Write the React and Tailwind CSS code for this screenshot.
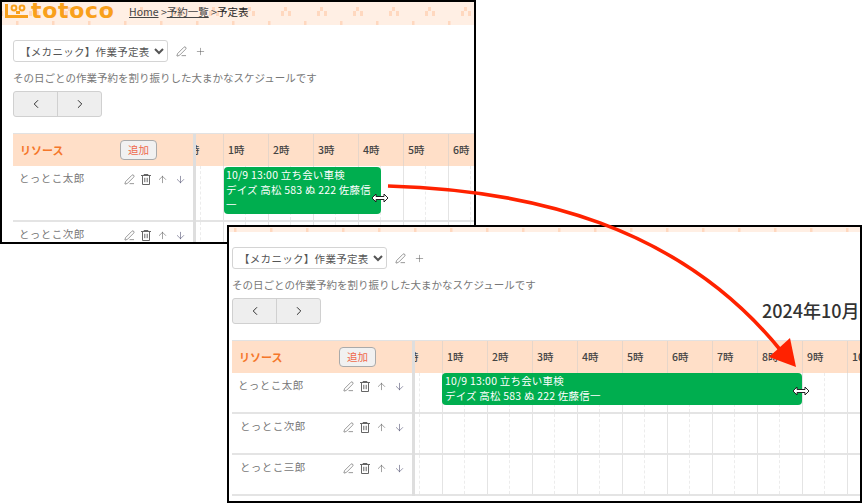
import React from "react";
import { PenLine, Plus, ArrowUp, ArrowDown, ChevronLeft, ChevronRight } from "lucide-react";

const HOURS = ["0時", "1時", "2時", "3時", "4時", "5時", "6時", "7時", "8時", "9時", "10時"];
const FONT = "font-['Noto_Sans_CJK_JP','Noto_Sans',sans-serif]";

function Trash() {
  return (
    <svg width="10" height="11" viewBox="0 0 10 11" fill="none" stroke="#666" strokeWidth="1">
      <path d="M0 1.5h10M3 1.5V.5h4v1M1.5 1.5v9h7v-9M3.8 3.8v4.4M6.2 3.8v4.4" />
    </svg>
  );
}

function Strip({ id, height, offset }) {
  return (
    <svg className="block w-full shrink-0" height={height}>
      <defs>
        <pattern id={id} x={offset} y={height - 23} width="36" height="23" patternUnits="userSpaceOnUse">
          <rect x="0" y="19" width="2.5" height="4" fill="#ffd8bf" />
          <rect x="16" y="5" width="3" height="4" fill="#ffd8bf" />
          <rect x="13" y="9" width="3" height="5" fill="#ffd8bf" />
          <rect x="20" y="9" width="3" height="5" fill="#ffd8bf" />
        </pattern>
      </defs>
      <rect width="100%" height="100%" fill="#ffefe4" />
      <rect width="100%" height="100%" fill={`url(#${id})`} />
    </svg>
  );
}

function Logo() {
  return (
    <div className="absolute left-[3px] top-0 flex h-[18px] items-center gap-[2px]">
      <svg width="24" height="16" viewBox="0 0 24 16">
        <path d="M1.5 1v12.5H23" fill="none" stroke="#f9a01b" strokeWidth="3" />
        <circle cx="9" cy="5" r="2.4" fill="none" stroke="#f9a01b" strokeWidth="2" />
        <circle cx="17" cy="5" r="2.4" fill="none" stroke="#f9a01b" strokeWidth="2" />
        <rect x="11" y="8" width="4" height="3" fill="#f9a01b" />
      </svg>
      <span className="font-['DejaVu_Sans'] text-[22px] leading-none font-bold tracking-[0.7px] text-[#f9a01b]">totoco</span>
    </div>
  );
}

function Cursor({ className }) {
  return (
    <svg className={`absolute ${className}`} width="18" height="10" viewBox="0 0 18 10">
      <path d="M1 5l4-4v2.5h8V1l4 4-4 4V6.5H5V9z" fill="#fff" stroke="#222" strokeWidth="1" strokeLinejoin="miter" />
    </svg>
  );
}

function HourCell({ label }) {
  return (
    <div className="flex h-full w-[45px] shrink-0 items-center border-r border-[#e6d6ca] pl-[4px] text-[10.5px] font-medium text-[#444]">
      {label}
    </div>
  );
}

function GridCell() {
  return (
    <div className="flex h-full w-[45px] shrink-0 border-r border-[#e4e4e4]">
      <div className="h-full w-[22px] border-r border-dashed border-[#ececec]" />
    </div>
  );
}

function Resource({ name, height, nameClass }) {
  return (
    <div className="flex border-b-2 border-[#e4e4e4] pl-[6px] pr-[7px] pt-[4px]" style={{ height }}>
      <span className={`text-[10.5px] leading-[16px] tracking-[0.5px] text-[#777] ${nameClass}`}>{name}</span>
      <div className="ml-auto flex h-[18px] items-center gap-[6px] text-[#555]">
        <PenLine size={11} strokeWidth={1.3} />
        <Trash />
        <ArrowUp size={11} strokeWidth={1.2} />
        <ArrowDown size={11} strokeWidth={1.2} className="ml-[1px] text-[#446]" />
      </div>
    </div>
  );
}

function Schedule({ rowHeight, headerHeight, names, title, event, navGap, tableGap }) {
  return (
    <div className={FONT}>
      <div className="mt-[15px] flex h-[22px] items-center">
        <select className="h-[22px] w-[155px] rounded-[3px] border border-[#d4d4d4] bg-white pl-[2px] text-[10.5px] tracking-[0.3px] text-[#555]">
          <option>【メカニック】作業予定表</option>
        </select>
        <PenLine size={11} strokeWidth={1.3} className="ml-[8px] text-[#555]" />
        <Plus size={11} strokeWidth={1.1} className="ml-[8px] text-[#555]" />
      </div>
      <p className="mt-[9px] h-[14px] text-[10.5px] leading-[14px] whitespace-nowrap text-[#777]">
        その日ごとの作業予約を割り振りした大まかなスケジュールです
      </p>
      <div className="flex items-start" style={{ marginTop: navGap }}>
        <div className="flex h-[26px] w-[89px] rounded-[3px] border border-[#d0d0d0] bg-[#eeeeee] text-[#222]">
          <div className="flex flex-1 items-center justify-center border-r border-[#d0d0d0]">
            <ChevronLeft size={14} strokeWidth={1.6} />
          </div>
          <div className="flex flex-1 items-center justify-center">
            <ChevronRight size={14} strokeWidth={1.6} />
          </div>
        </div>
        {title && (
          <div className="ml-[441px] text-[18px] leading-[24px] font-medium whitespace-nowrap text-[#333]">2024年10月</div>
        )}
      </div>
      <div className="flex border-t border-[#e2e2e2]" style={{ marginTop: tableGap }}>
        <div className="w-[180px] shrink-0">
          <div className="flex items-center bg-[#ffdfc8] pl-[7px] pr-[36px]" style={{ height: headerHeight }}>
            <span className="text-[11px] font-bold text-[#f5772a]">リソース</span>
            <div className="ml-auto flex h-[20px] w-[37px] items-center justify-center rounded-[4px] border border-[#aaa] bg-[#f1f1f1] text-[10.5px] text-[#ef6a4c]">
              追加
            </div>
          </div>
          {names.map((n, i) => (
            <Resource key={n} name={n} height={rowHeight} nameClass={i > 0 && rowHeight < 50 ? "ml-[2px]" : ""} />
          ))}
        </div>
        <div className="w-[3px] shrink-0 bg-[#dedede]" />
        <div className="relative min-w-0 flex-1 overflow-hidden">
          <div className="flex bg-[#ffdfc8] pl-0" style={{ height: headerHeight }}>
            <div className="-ml-[17px] flex h-full">
              {HOURS.map((h) => (
                <HourCell key={h} label={h} />
              ))}
            </div>
          </div>
          {names.map((n) => (
            <div key={n} className="-ml-[17px] flex border-b-2 border-[#e4e4e4]" style={{ height: rowHeight }}>
              {HOURS.map((h) => (
                <GridCell key={h} />
              ))}
            </div>
          ))}
          <div
            className="absolute overflow-hidden rounded-[4px] bg-[#00ae4f] pr-[2px] text-[10.5px] leading-[15px] tracking-[0.2px] text-white"
            style={event.style}
          >
            <div>10/9 13:00 立ち会い車検</div>
            <div>デイズ 高松 583 ぬ 222 佐藤信一</div>
          </div>
        </div>
      </div>
    </div>
  );
}

export default function App() {
  return (
    <div className="relative h-[503px] w-[862px] overflow-hidden bg-white">
      <div className="absolute left-0 top-0 h-[244px] w-[476px] overflow-hidden border-2 border-black bg-white">
        <Strip id="p1" height={23} offset={14} />
        <Logo />
        <div className={`absolute left-[127px] top-[3px] text-[10.5px] leading-[14px] text-[#444] ${FONT}`}>
          <span className="underline">Home</span> &gt;<span className="underline">予約一覧</span> &gt;<span className="text-[#222]">予定表</span>
        </div>
        <div className="pl-[11px]">
          <Schedule
            rowHeight={56}
            headerHeight={32}
            names={["とっとこ太郎", "とっとこ次郎"]}
            navGap={6}
            tableGap={16}
            event={{ style: { left: 28, top: 33, width: 157, height: 47, paddingLeft: 2 } }}
          />
        </div>
      </div>
      <Cursor className="left-[371px] top-[193px]" />

      <div className="absolute left-[227px] top-[225px] h-[278px] w-[635px] overflow-hidden border-2 border-black bg-white">
        <Strip id="p2" height={5} offset={5} />
        <div className="pl-[3px]">
          <Schedule
            rowHeight={41}
            headerHeight={32}
            title
            names={["とっとこ太郎", "とっとこ次郎", "とっとこ三郎"]}
            navGap={6}
            tableGap={16}
            event={{ style: { left: 27, top: 32, width: 360, height: 32, paddingLeft: 3 } }}
          />
        </div>
      </div>
      <Cursor className="left-[792px] top-[386px]" />

      <svg className="absolute left-0 top-0" width="862" height="503" fill="none">
        <path d="M388 186C530 190 680 225 782 352" stroke="#ff2200" strokeWidth="3.6" />
        <path d="M790 338L796 367L769 357Z" fill="#ff2200" />
      </svg>
    </div>
  );
}
